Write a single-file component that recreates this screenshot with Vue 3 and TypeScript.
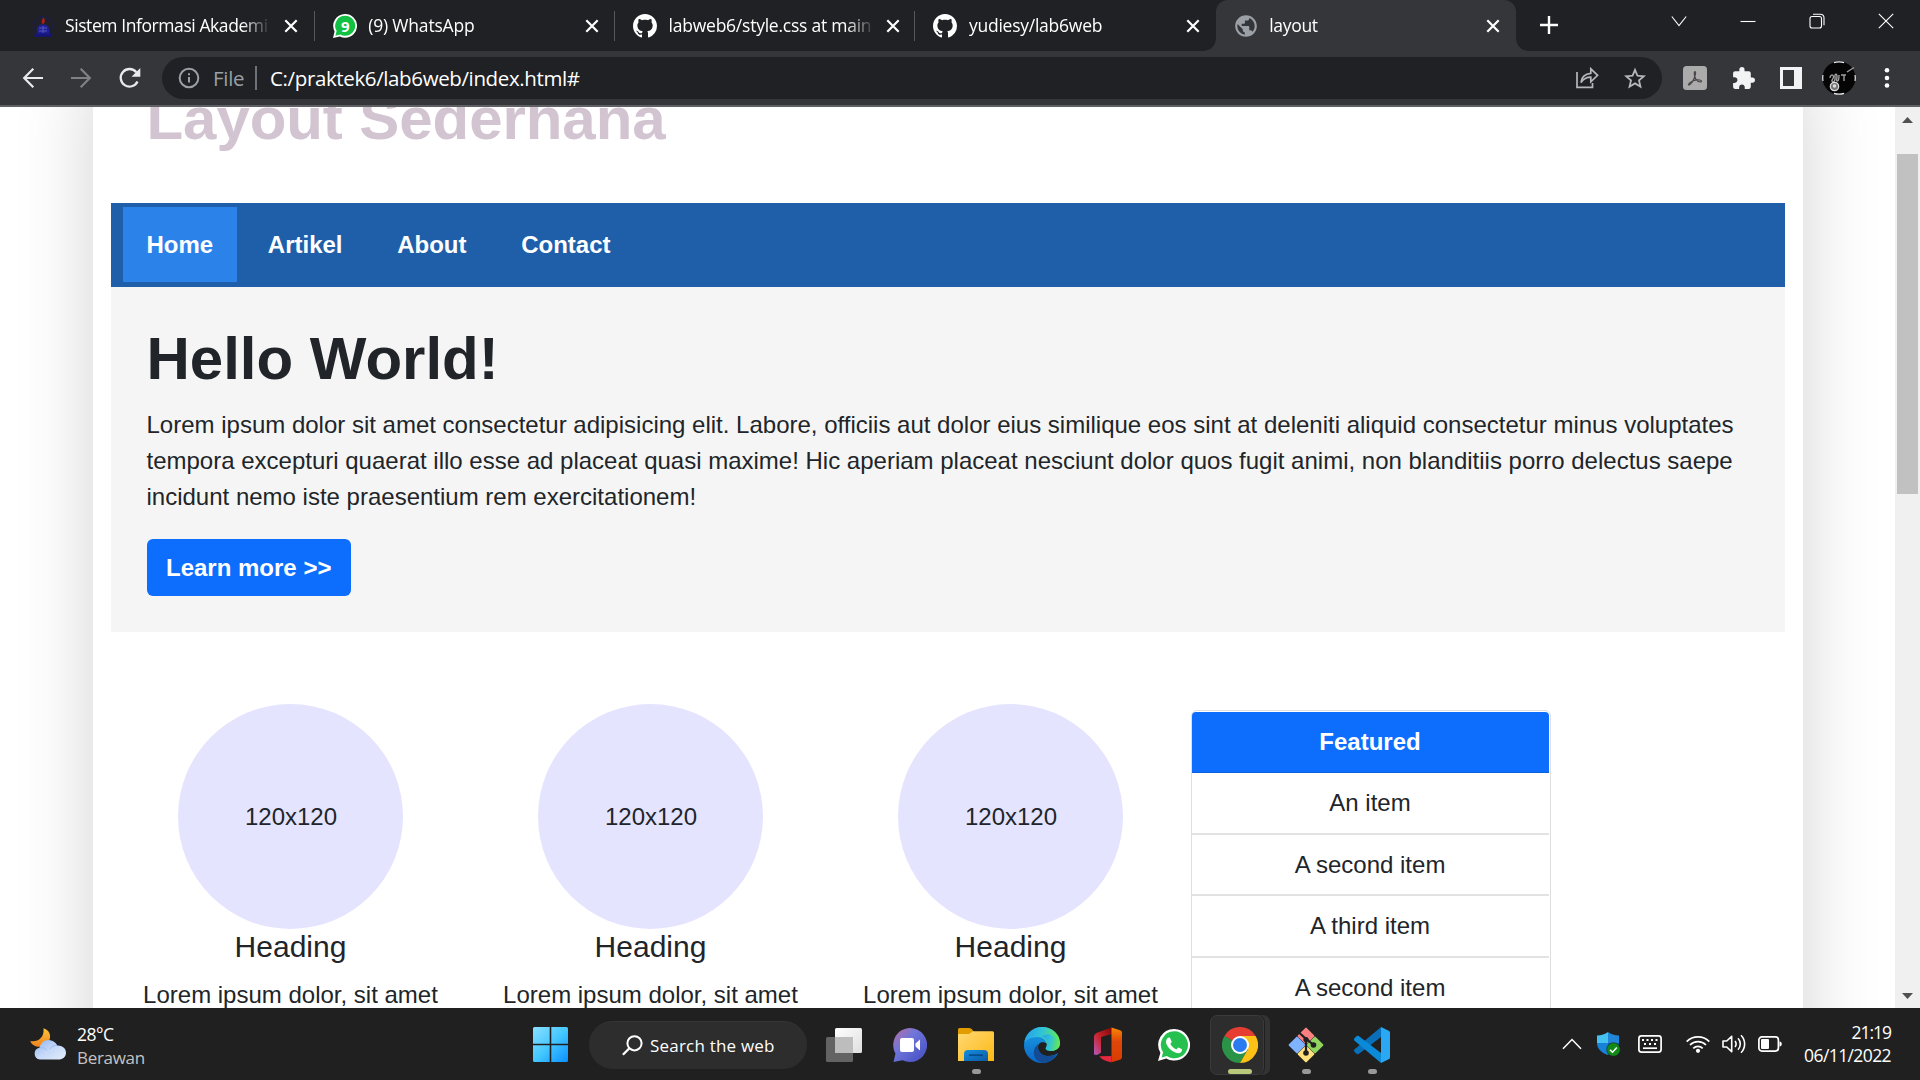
<script setup lang="ts">
interface Tab {
  title: string
  icon: 'campus' | 'whatsapp' | 'github' | 'globe'
  active?: boolean
  spacing: number
}

const tabs: Tab[] = [
  { title: 'Sistem Informasi Akademi', icon: 'campus', spacing: -0.42 },
  { title: '(9) WhatsApp', icon: 'whatsapp', spacing: -0.2 },
  { title: 'labweb6/style.css at main', icon: 'github', spacing: -0.24 },
  { title: 'yudiesy/lab6web', icon: 'github', spacing: -0.24 },
  { title: 'layout', icon: 'globe', active: true, spacing: -0.3 },
]

const menu = ['Home', 'Artikel', 'About', 'Contact']
const columns = [1, 2, 3]
const items = ['An item', 'A second item', 'A third item', 'A second item']
</script>

<template>
  <div class="screen">
    <div class="strip">
      <div v-for="(tab, i) in tabs" :key="i" class="tab" :class="{ active: tab.active }">
        <span class="favicon">
          <svg v-if="tab.icon === 'campus'" width="24" height="24" viewBox="0 0 24 24">
            <circle cx="12" cy="12" r="9.200" fill="none" stroke="#1b1b5c" stroke-width="1.300" stroke-dasharray="2 .8" />
            <path d="M6 14l3-3.500h6l3 3.500v6H6z" fill="#1f1f96" />
            <path d="M3.500 19.500h17v3.300h-17z" fill="#15157a" />
            <path d="M8 14h8M8 17h8M12 12v7" stroke="#5b5bc0" stroke-width=".9" />
            <path d="M12.500 3.500c2.500 3 1 6-.6 6.700-1.900-1-1.500-3.900.6-6.700z" fill="#b01c22" />
          </svg>
          <svg v-else-if="tab.icon === 'whatsapp'" width="24" height="24" viewBox="0 0 24 24">
            <path d="M12.200 0A11.800 11.800 0 0 1 12.200 23.700c-2 0-3.800-.4-5.300-1.200L0 24l1.600-6.600A11.800 11.800 0 0 1 12.200 0z" fill="#fff" />
            <path d="M12.200 1.800a10 10 0 1 1-4.900 18.700L2.400 21.700l1.200-4.700A10 10 0 0 1 12.200 1.800z" fill="#12c143" />
            <text x="12.300" y="17.600" text-anchor="middle" class="badge9">9</text>
          </svg>
          <svg v-else-if="tab.icon === 'github'" width="24" height="24" viewBox="0 0 16 16">
            <path fill="#fff" d="M8 0C3.580 0 0 3.580 0 8c0 3.540 2.290 6.530 5.470 7.590.4.070.55-.17.55-.38 0-.19-.01-.82-.01-1.490-2.010.37-2.530-.49-2.690-.94-.09-.23-.48-.94-.82-1.130-.28-.15-.68-.52-.01-.53.63-.01 1.080.58 1.230.82.72 1.210 1.870.87 2.330.66.070-.52.28-.87.51-1.070-1.780-.2-3.640-.89-3.640-3.950 0-.87.31-1.590.82-2.150-.08-.2-.36-1.020.08-2.120 0 0 .67-.21 2.200.82.64-.18 1.320-.27 2-.27s1.360.09 2 .27c1.530-1.040 2.200-.82 2.200-.82.44 1.100.16 1.920.08 2.120.51.56.82 1.270.82 2.150 0 3.070-1.870 3.750-3.650 3.950.29.25.54.73.54 1.480 0 1.070-.01 1.930-.01 2.200 0 .21.15.46.55.38A8.010 8.010 0 0 0 16 8c0-4.420-3.580-8-8-8z" />
          </svg>
          <svg v-else width="26" height="26" viewBox="0 0 24 24">
            <path fill="#9aa0a6" d="M12 2C6.480 2 2 6.480 2 12s4.480 10 10 10 10-4.480 10-10S17.520 2 12 2zm-1 17.930c-3.950-.49-7-3.850-7-7.930 0-.62.080-1.210.210-1.790L9 15v1c0 1.100.9 2 2 2v1.930zm6.900-2.540c-.26-.81-1-1.390-1.900-1.390h-1v-3c0-.55-.45-1-1-1H8v-2h2c.55 0 1-.45 1-1V7h2c1.100 0 2-.9 2-2v-.41c2.930 1.190 5 4.060 5 7.410 0 2.080-.8 3.970-2.100 5.390z" />
          </svg>
        </span>
        <span class="title" :style="{ letterSpacing: tab.spacing + 'px' }">{{ tab.title }}</span>
        <svg class="close" width="14" height="14" viewBox="0 0 14 14">
          <path d="M1.300 1.300l11.400 11.400M12.700 1.300L1.300 12.700" stroke="#fff" stroke-width="2.200" />
        </svg>
      </div>
      <svg class="plus" width="20" height="20" viewBox="0 0 20 20">
        <path d="M10 1v18M1 10h18" stroke="#fff" stroke-width="2.400" />
      </svg>
      <div class="controls">
        <span><svg width="16" height="12" viewBox="0 0 16 12"><path d="M.8 1.500L8 10.500l7.200-9" fill="none" stroke="#fff" stroke-width="1.100" /></svg></span>
        <span><svg width="16" height="12" viewBox="0 0 16 12"><path d="M.5 6.500h15" stroke="#fff" stroke-width="1.100" /></svg></span>
        <span><svg width="16" height="16" viewBox="0 0 16 16" fill="none" stroke="#fff" stroke-width="1.100"><rect x="1" y="3.500" width="11.500" height="11.500" rx="2" /><path d="M4 1.200h7.500a3.500 3.500 0 0 1 3.500 3.500v7.500" /></svg></span>
        <span><svg width="16" height="16" viewBox="0 0 16 16"><path d="M.8.800l14.400 14.400M15.200.8L.8 15.200" stroke="#fff" stroke-width="1.100" /></svg></span>
      </div>
    </div>

    <div class="toolbar">
      <span class="cell"><svg width="22" height="22" viewBox="0 0 22 22" fill="none" stroke="#e8eaed" stroke-width="2.200"><path d="M21 11H2.500M11.300 1.800L2.200 11l9.100 9.200" /></svg></span>
      <span class="cell"><svg width="22" height="22" viewBox="0 0 22 22" fill="none" stroke="#7f8185" stroke-width="2.200"><path d="M1 11h18.500M10.700 1.800l9.100 9.200-9.100 9.200" /></svg></span>
      <span class="cell reload">
        <svg width="22" height="22" viewBox="0 0 22 22"><path d="M18.500 14.500A8.800 8.800 0 1 1 17.300 5.200" fill="none" stroke="#e8eaed" stroke-width="2.300" /><path d="M21.300 1v8.800h-8.800z" fill="#e8eaed" /></svg>
      </span>
      <div class="omnibox">
        <svg class="info" width="22" height="22" viewBox="0 0 22 22"><circle cx="11" cy="11" r="9.300" fill="none" stroke="#9aa0a6" stroke-width="2" /><path d="M11 10v5.500M11 6.200v2.100" stroke="#9aa0a6" stroke-width="2" /></svg>
        <span class="scheme">File</span>
        <span class="divider"></span>
        <span class="url">C:/praktek6/lab6web/index.html#</span>
        <span class="cell share">
          <svg width="24" height="24" viewBox="0 0 24 24" fill="none" stroke="#b4b7bb" stroke-width="1.700"><path d="M2 6v15.300h15.500V17" /><path d="M6 16.500c.5-5.500 3.800-8.700 9.800-9.200V2.800l6.800 6.500-6.800 6.500v-4.600c-4.300 0-7.300 1.600-9.800 5.300z" /></svg>
        </span>
        <span class="cell">
          <svg width="24" height="24" viewBox="0 0 24 24"><path fill="#b4b7bb" d="M23 9.600l-7.900-.7L12 1.600 8.900 8.900 1 9.600l6 5.200-1.800 7.700L12 18.400l6.800 4.100-1.800-7.700zM12 16.300l-4.100 2.500 1.100-4.700-3.600-3.100 4.800-.4L12 6.200l1.900 4.400 4.700.4-3.600 3.100 1.100 4.700z" /></svg>
        </span>
      </div>
      <span class="cell">
        <svg width="24" height="24" viewBox="0 0 24 24"><rect width="24" height="24" rx="3.500" fill="#ababab" /><path d="M5.500 18.500c.5-2 6-5 11-4.500 2.500.4 2.500 2 .8 2-3.300-.2-6.300-3.800-6-9 .1-2 1.500-1.700 1.300.2-.5 4-3.300 9.800-5.600 11.300-1 .6-1.600.5-1.500 0z" fill="none" stroke="#484848" stroke-width="1.200" /></svg>
      </span>
      <span class="cell">
        <svg width="25" height="25" viewBox="0 0 24 24"><path fill="#f1f3f4" d="M20.500 11H19V7c0-1.100-.9-2-2-2h-4V3.500a2.500 2.500 0 0 0-5 0V5H4c-1.100 0-1.990.9-1.990 2v3.800H3.500c1.490 0 2.700 1.210 2.700 2.700s-1.210 2.700-2.700 2.700H2V20c0 1.100.9 2 2 2h3.800v-1.500c0-1.490 1.210-2.700 2.700-2.700s2.700 1.210 2.700 2.700V22H17c1.100 0 2-.9 2-2v-4h1.500a2.500 2.500 0 0 0 0-5z" /></svg>
      </span>
      <span class="cell">
        <svg width="22" height="22" viewBox="0 0 22 22"><path fill="#f1f3f4" fill-rule="evenodd" d="M0 0h22v22H0zM3 3v16h11V3z" /></svg>
      </span>
      <span class="cell">
        <svg width="34" height="34" viewBox="0 0 34 34">
          <circle cx="17" cy="17" r="16.500" fill="#050505" />
          <path d="M12 1.600a16.300 16.300 0 0 1 10 0M12 32.400a16.300 16.300 0 0 0 10 0M1 14a16.500 16.500 0 0 0 0 6M33 14a16.500 16.500 0 0 1 0 6" fill="none" stroke="#e8e8e8" stroke-width="1.200" />
          <path d="M8 17c0-3 3-4 3.500-1.500s-3 4-1 5 3-2 2.500-5 2-3 2 0-1 4.500.5 4.500 1.500-4 1.500-6M19 14h5M22 14v6M25 11l7-4.500" fill="none" stroke="#a0a0a0" stroke-width="1.400" />
          <circle cx="12.500" cy="25.500" r="4.200" fill="#777" stroke="#ddd" stroke-width="1.200" /><circle cx="12.500" cy="25" r="1.700" fill="#ddd" />
        </svg>
      </span>
      <span class="cell"><svg width="6" height="22" viewBox="0 0 6 22" fill="#fff"><circle cx="3" cy="3.300" r="2.300" /><circle cx="3" cy="11" r="2.300" /><circle cx="3" cy="18.500" r="2.300" /></svg></span>
    </div>

    <div class="viewport">
      <div class="page">
        <main class="container">
          <header><h1>Layout Sederhana</h1></header>
          <nav>
            <a v-for="(entry, i) in menu" :key="entry" :class="{ current: i === 0 }">{{ entry }}</a>
          </nav>
          <section class="hero">
            <h1>Hello World!</h1>
            <p>Lorem ipsum dolor sit amet consectetur adipisicing elit. Labore, officiis aut dolor eius similique eos sint at deleniti aliquid consectetur minus voluptates tempora excepturi quaerat illo esse ad placeat quasi maxime! Hic aperiam placeat nesciunt dolor quos fugit animi, non blanditiis porro delectus saepe incidunt nemo iste praesentium rem exercitationem!</p>
            <a class="btn">Learn more &gt;&gt;</a>
          </section>
          <section class="row">
            <div v-for="n in columns" :key="n" class="box">
              <div class="circle">120x120</div>
              <h3>Heading</h3>
              <p>Lorem ipsum dolor, sit amet</p>
            </div>
            <div class="card">
              <div class="card-header">Featured</div>
              <div v-for="(item, i) in items" :key="i" class="item">{{ item }}</div>
            </div>
          </section>
        </main>
      </div>
      <div class="scrollbar">
        <svg class="arrow" width="11" height="6" viewBox="0 0 11 6"><path d="M5.500 0L11 6H0z" fill="#505050" /></svg>
        <div class="thumb"></div>
        <svg class="arrow down" width="11" height="6" viewBox="0 0 11 6"><path d="M0 0h11L5.500 6z" fill="#505050" /></svg>
      </div>
    </div>

    <div class="taskbar">
      <div class="weather">
        <svg width="36" height="32" viewBox="0 0 36 32">
          <defs>
            <linearGradient id="moon" x1="0" y1="0" x2="0" y2="1"><stop offset="0" stop-color="#fbc43a" /><stop offset="1" stop-color="#f0821e" /></linearGradient>
            <linearGradient id="cloud" x1="0" y1="0" x2="1" y2="1"><stop offset="0" stop-color="#8db4ee" /><stop offset=".5" stop-color="#c5d8f8" /><stop offset="1" stop-color="#e3ecfb" /></linearGradient>
          </defs>
          <path d="M13.500.3c8 2.400 8.500 11.200 3 16-5.500 4.600-14.500 2.200-16.200-3.400 6 1.800 14.500-2.400 13.200-12.600z" fill="url(#moon)" />
          <path d="M10 31.500a5.900 5.900 0 0 1-.4-11.700c1-6.800 9.400-11 15.600-5 1.200 1 1.600 1.800 2 2.700 4.700-.3 8.800 2.600 8.800 7.200 0 4.200-3.300 6.800-7.500 6.800z" fill="url(#cloud)" />
          <path d="M9.600 19.800c4.500-.8 6.500 1 7 2.500M27.200 17.500c-3-.5-6 1-7.200 3.500" fill="none" stroke="#9dbcf0" stroke-width="1" />
        </svg>
        <div class="lines"><span class="temp">28°C</span><span class="desc">Berawan</span></div>
      </div>

      <div class="apps">
        <span class="app">
          <svg width="35" height="35" viewBox="0 0 35 35">
            <defs><linearGradient id="win" gradientUnits="userSpaceOnUse" x1="0" y1="0" x2="35" y2="35"><stop offset="0" stop-color="#8be0ff" /><stop offset=".5" stop-color="#45c8ff" /><stop offset="1" stop-color="#0a8fff" /></linearGradient></defs>
            <path d="M1.500 0H16.700v16.700H0V1.500A1.500 1.500 0 0 1 1.500 0zM18.300 0h15.200A1.500 1.500 0 0 1 35 1.500v15.200H18.300zM0 18.300h16.700V35H1.500A1.500 1.500 0 0 1 0 33.500zM18.300 18.300H35v15.200a1.500 1.500 0 0 1-1.500 1.500H18.300z" fill="url(#win)" />
          </svg>
        </span>
        <div class="search">
          <svg width="21" height="21" viewBox="0 0 21 21" fill="none" stroke="#fff" stroke-width="2"><circle cx="12.500" cy="8.300" r="7.100" /><path d="M7.400 13.300L.9 19.800" stroke-width="2.300" /></svg>
          <span>Search the web</span>
        </div>
        <span class="app">
          <svg width="36" height="34" viewBox="0 0 36 34">
            <defs><linearGradient id="tv" x1="0" y1="0" x2="1" y2="1"><stop offset="0" stop-color="#fff" /><stop offset="1" stop-color="#dedede" /></linearGradient></defs>
            <rect y="9" width="27" height="25" rx="1.500" fill="#636363" /><rect x="9" width="27" height="25" rx="1.500" fill="url(#tv)" /><path d="M9 9h18v16H10.500A1.500 1.500 0 0 1 9 23.500z" fill="#bdbdbd" />
          </svg>
        </span>
        <span class="app">
          <svg width="34" height="34" viewBox="0 0 34 34">
            <defs><linearGradient id="chat" x1="0" y1=".2" x2=".7" y2=".9"><stop offset="0" stop-color="#a86fae" /><stop offset=".4" stop-color="#7176d9" /><stop offset="1" stop-color="#5059c9" /></linearGradient></defs>
            <path d="M17 0a17 17 0 1 1-7.500 32.200L.5 34l2-8.500A17 17 0 0 1 17 0z" fill="url(#chat)" />
            <rect x="7" y="10" width="14" height="14" rx="2" fill="#fff" /><path d="M22.500 15.500l4.500-4v11l-4.500-4z" fill="#fff" />
          </svg>
        </span>
        <span class="app">
          <svg width="36" height="33" viewBox="0 0 36 33">
            <defs><linearGradient id="fold" x1="0" y1="0" x2="1" y2="1"><stop offset="0" stop-color="#ffd975" /><stop offset="1" stop-color="#fdb813" /></linearGradient><linearGradient id="fold2" x1="0" y1="0" x2="1" y2="1"><stop offset="0" stop-color="#1490df" /><stop offset="1" stop-color="#0c59a4" /></linearGradient></defs>
            <path d="M1.500 0H11c1.500 0 2.500.7 3.300 1.800L16 4v6H0V1.500A1.500 1.500 0 0 1 1.500 0z" fill="#e19d00" />
            <path d="M0 6h11l4-2.800h19.500A1.500 1.500 0 0 1 36 4.700V33H0z" fill="url(#fold)" />
            <path d="M6 33v-7a4 4 0 0 1 4-4h16a4 4 0 0 1 4 4v7z" fill="url(#fold2)" /><path d="M11 27.200h14" stroke="#064a8b" stroke-width="1.700" />
          </svg>
          <i class="mark"></i>
        </span>
        <span class="app">
          <svg width="36" height="36" viewBox="0 0 36 36">
            <defs>
              <linearGradient id="edge1" x1="0" y1=".3" x2="1" y2=".5"><stop offset="0" stop-color="#27a0e8" /><stop offset=".45" stop-color="#2fc3d8" /><stop offset="1" stop-color="#66eb4c" /></linearGradient>
              <linearGradient id="edge2" x1="0" y1="0" x2="0" y2="1"><stop offset="0" stop-color="#1ba0e6" /><stop offset="1" stop-color="#0a66c6" /></linearGradient>
            </defs>
            <circle cx="18" cy="18" r="18" fill="url(#edge2)" />
            <path d="M.3 16C1.500 7 9 0 18 0c10.500 0 18 7.500 18 15.700 0 5.500-4.500 8.500-9 8.300-4.500 0-6-1.800-5-3.400 2.300-4-1-10.600-8.500-10.600C7.500 10 1.500 12.800.3 16z" fill="url(#edge1)" />
            <path d="M36 16c0 5.200-4.500 8.200-9 8-4.500 0-6-1.800-5-3.400.8-1.500.9-2.800.4-4.300-4-2.300-8.400-.8-8.400 4.200 0 3.700 3.500 8.300 9.500 8.500 4 .1 7-1.300 9.500-2.500L36 26z" fill="#202020" />
            <path d="M14 17c-1.500 6 3 12 10 12 3.800 0 6.500-1 8.500-2-2.500 5-7.500 8.800-13.500 8.800C9 34.500 7 23 14 17z" fill="#134c94" />
            <path d="M24 7c6 2 12 5 12 9.500 0 4.700-4.500 7.500-9 7.500-4.500 0-6-1.800-5-3.400C25 16 22 11 18 9z" fill="url(#edge1)" />
          </svg>
        </span>
        <span class="app">
          <svg width="28" height="36" viewBox="0 0 28 36">
            <defs><linearGradient id="off1" x1="0" y1="1" x2="1" y2="0"><stop offset="0" stop-color="#b65abf" /><stop offset=".45" stop-color="#c9252c" /><stop offset="1" stop-color="#7d0606" /></linearGradient><linearGradient id="off2" x1="0" y1="0" x2="0" y2="1"><stop offset="0" stop-color="#f88a05" /><stop offset=".4" stop-color="#e0460a" /><stop offset="1" stop-color="#d83b01" /></linearGradient></defs>
            <path d="M17.500.5L3 5.800C1 6.600 0 8 0 10v17.500l3 .5 4-2.200V11.500c0-1.200.6-1.800 1.600-2L18 7z" fill="url(#off1)" />
            <path d="M17.500.5l8.500 2.800c1.300.5 2 1.400 2 2.800v24c0 1.200-.7 2.200-2 2.600l-8.500 2.600z" fill="url(#off2)" />
            <path d="M17.500 29l-12 .2c1.500 3.200 8 5.300 12 6.100z" fill="#e5283f" />
          </svg>
        </span>
        <span class="app">
          <svg width="32" height="32" viewBox="0 0 32 32">
            <path d="M16.200 0a15.800 15.800 0 1 1-8 29.400L0 32l2.400-8.300A15.800 15.800 0 0 1 16.200 0z" fill="#fff" />
            <path d="M16.200 2.300a13.500 13.500 0 1 1-7.400 24.600l-5.200 1.500 1.500-5.200A13.500 13.500 0 0 1 16.200 2.300z" fill="#26c04e" />
            <path d="M11 8.600c.6 0 1 .2 1.300.9l1.300 3c.2.600-.1 1-1.300 2.300 1.500 2.800 3.500 4.500 6.200 5.600.8-.9 1.400-2 1.900-1.900l3.300 1.600c.6.300.3 2-.4 2.800-1.500 1.500-3.500 1.700-6 .7-4-1.500-7.500-5-9.100-9-.7-2.200.5-5.900 2.800-6z" fill="#fff" />
          </svg>
        </span>
        <span class="app running">
          <span class="plate"></span>
          <svg width="36" height="36" viewBox="0 0 36 36">
            <path d="M18 18L2.400 9A18 18 0 0 1 33.600 9z" fill="#e63d32" />
            <path d="M18 18l7.800 4.500L18 36A18 18 0 0 1 2.400 9z" fill="#2b9348" />
            <path d="M18 9h15.600A18 18 0 0 1 18 36l7.800-13.500z" fill="#fcc117" />
            <circle cx="18" cy="18" r="9" fill="#fff" /><circle cx="18" cy="18" r="7" fill="#2a7bf0" />
          </svg>
          <i class="mark wide"></i>
        </span>
        <span class="app">
          <svg width="36" height="36" viewBox="0 0 36 36">
            <rect x="11.800" y="2.800" width="12.400" height="12.400" rx="1" fill="#f98080" transform="rotate(45 18 9)" />
            <rect x="2.800" y="11.800" width="12.400" height="12.400" rx="1" fill="#7fb2ff" transform="rotate(45 9 18)" />
            <rect x="20.800" y="11.800" width="12.400" height="12.400" rx="1" fill="#8fd560" transform="rotate(45 27 18)" />
            <rect x="11.800" y="20.800" width="12.400" height="12.400" rx="1" fill="#ffe07a" transform="rotate(45 18 27)" />
            <path d="M11.500 6L18 12v14M18 11.500l8 7" fill="none" stroke="#202020" stroke-width="2.200" /><circle cx="18" cy="12.500" r="2.600" fill="#202020" /><circle cx="18" cy="26" r="2.800" fill="#202020" /><circle cx="25.500" cy="18" r="2.800" fill="#202020" />
          </svg>
          <i class="mark"></i>
        </span>
        <span class="app">
          <svg width="36" height="36" viewBox="0 0 36 36">
            <path d="M27 0v10L5 26.700c-1 .7-2 .6-2.800-.1L.6 25c-.8-.8-.8-2 0-2.700z" fill="#0a6fb8" />
            <path d="M27 36V26L5 9.300c-1-.7-2-.6-2.800.1L.6 11c-.8.800-.8 2 0 2.700z" fill="#0b8ad8" />
            <path d="M27 0l7.700 3.700c.8.400 1.300 1.200 1.300 2v24.600c0 .8-.5 1.600-1.300 2L27 36z" fill="#2aa8f4" />
          </svg>
          <i class="mark"></i>
        </span>
      </div>

      <div class="tray">
        <svg class="t1" width="20" height="12" viewBox="0 0 20 12"><path d="M1 10.800L10 1.500l9 9.300" fill="none" stroke="#fff" stroke-width="1.500" /></svg>
        <svg class="t2" width="24" height="25" viewBox="0 0 24 25">
          <path d="M11 0c3 2.500 6.500 3.300 11 3.400v7.600H11z" fill="#2186d8" /><path d="M11 0C8 2.500 4.500 3.300 0 3.400v7.600h11z" fill="#45c1f2" /><path d="M0 11h11v12C5 21 0 17 0 11z" fill="#1683d8" /><path d="M11 11h11c0 6-5 10-11 12z" fill="#0b62b8" />
          <circle cx="16.500" cy="17.500" r="6.800" fill="#128a17" stroke="#1c1c1c" stroke-width=".6" /><path d="M13 17.700l2.500 2.500 4.300-4.600" fill="none" stroke="#fff" stroke-width="1.500" />
        </svg>
        <svg class="t3" width="24" height="18" viewBox="0 0 24 18" stroke="#fff" fill="none"><rect x=".9" y=".9" width="22.200" height="16.200" rx="2.500" stroke-width="1.700" /><path d="M4 5h2M8.500 5h2M13 5h2M17.500 5h2M6 9h2M11 9h2M16 9h2" stroke-width="2" /><path d="M5 13.200h14" stroke-width="1.700" /></svg>
        <svg class="t4" width="24" height="18" viewBox="0 0 24 18" stroke="#fff" fill="none" stroke-width="1.700"><path d="M.7 6.600a16 16 0 0 1 22.600 0M4 10a11.300 11.300 0 0 1 16 0M7.300 13.300a6.600 6.600 0 0 1 9.400 0" /><circle cx="12" cy="15.800" r="2.100" fill="#fff" stroke="none" /></svg>
        <svg class="t5" width="24" height="20" viewBox="0 0 24 20" stroke="#fff" fill="none" stroke-width="1.600"><path d="M1 7v6h3.700l5 4.700V2.300L4.700 7z" stroke-linejoin="round" /><path d="M13 7a5 5 0 0 1 0 6M16 4.200a8.500 8.500 0 0 1 0 11.600M19 1.200a12.500 12.500 0 0 1 0 17.600" /></svg>
        <svg class="t6" width="24" height="16" viewBox="0 0 24 16"><rect x=".9" y=".9" width="19.500" height="14.200" rx="3" fill="none" stroke="#fff" stroke-width="1.700" /><rect x="3" y="3" width="8" height="10" rx="1" fill="#fff" /><path d="M21.500 5.500c3 0 3 5 0 5z" fill="#fff" /></svg>
        <div class="clock"><span class="time">21:19</span><span class="date">06/11/2022</span></div>
      </div>
    </div>
  </div>
</template>

<style>
body {
  overflow: hidden;
  background: #fff;
}
</style>

<style scoped>
* {
  box-sizing: border-box;
}
svg {
  display: block;
  flex: none;
}
.screen {
  width: 1920px;
  height: 1080px;
  display: flex;
  flex-direction: column;
  overflow: hidden;
  font-family: "Open Sans", "Noto Sans", sans-serif;
}

/* tab strip */
.strip {
  height: 51px;
  flex: none;
  display: flex;
  background: #202124;
  padding-left: 14.500px;
}
.tab {
  width: 300.300px;
  flex: none;
  height: 51px;
  display: flex;
  align-items: center;
  padding-left: 17px;
  position: relative;
  border-right: 1.500px solid #4d4f53;
  border-image: linear-gradient(transparent 23%, #55575b 23%, #55575b 80%, transparent 80%) 1;
  border-width: 0 1.500px 0 0;
}
.tab:nth-child(4),
.tab.active {
  border: 0;
}
.tab.active {
  background: #35363a;
  border-radius: 12px 12px 0 0;
}
.tab.active::before,
.tab.active::after {
  content: "";
  position: absolute;
  bottom: 0;
  width: 12px;
  height: 12px;
}
.tab.active::before {
  left: -12px;
  background: radial-gradient(circle at 0 0, transparent 11.500px, #35363a 12px);
}
.tab.active::after {
  right: -12px;
  background: radial-gradient(circle at 100% 0, transparent 11.500px, #35363a 12px);
}
.favicon {
  width: 24px;
  height: 24px;
  margin-right: 11.500px;
  display: flex;
  align-items: center;
  justify-content: center;
}
.tab:first-child .favicon {
  width: 22px;
}
.tab:nth-child(n + 2) .favicon {
  margin-left: 1px;
}
.badge9 {
  font: bold 15px "Open Sans", sans-serif;
  fill: #fff;
}
.title {
  width: 206px;
  margin-top: -1px;
  white-space: nowrap;
  color: #fff;
  font-size: 17.500px;
  line-height: 24px;
  -webkit-mask-image: linear-gradient(90deg, #000 86%, transparent 100%);
  mask-image: linear-gradient(90deg, #000 86%, transparent 100%);
}
.close {
  position: relative;
  margin-left: 11px;
}
.tab:first-child .close {
  margin-left: 13px;
}
.plus {
  margin: 15px 0 0 23px;
}
.controls {
  margin-left: auto;
  height: 42px;
  display: flex;
}
.controls span {
  width: 69px;
  display: flex;
  align-items: center;
  justify-content: center;
}

/* toolbar */
.toolbar {
  height: 56px;
  flex: none;
  display: flex;
  align-items: center;
  padding: 0 9px;
  background: #35363a;
  border-bottom: 2px solid #5f6063;
}
.cell {
  width: 48px;
  flex: none;
  display: flex;
  align-items: center;
  justify-content: center;
}
.reload {
  padding-left: 1px;
}
.omnibox {
  flex: 1;
  height: 42px;
  margin: 0 9px;
  padding: 0 3px 0 16px;
  border-radius: 21px;
  background: #202124;
  display: flex;
  align-items: center;
  font-size: 20.500px;
  line-height: 28px;
}
.scheme {
  width: 41px;
  margin-left: 13px;
  color: #9aa0a6;
  letter-spacing: -.3px;
}
.divider {
  width: 2px;
  height: 24px;
  margin-left: 1px;
  background: #6f7276;
}
.url {
  margin-left: 13px;
  color: #fff;
  letter-spacing: -.37px;
}
.share {
  margin-left: auto;
}

/* page */
.viewport {
  flex: 1;
  min-height: 0;
  display: flex;
  overflow: hidden;
}
.page {
  width: 1895px;
  flex: none;
  overflow: hidden;
  background: #fff;
  font-family: "Liberation Sans", Arial, sans-serif;
  font-size: 24px;
  line-height: 36px;
  color: #212529;
}
.container {
  width: 1710px;
  height: 1600px;
  margin: -60px auto 0;
  padding: 0 18px;
  background: #fff;
  box-shadow: 0 24px 72px rgba(0, 0, 0, .175);
}
h1,
h3,
p {
  margin: 0;
}
h1 {
  font-size: 60px;
  line-height: 72px;
  font-weight: bold;
}
header {
  padding: 36px 36px 48px;
}
header h1 {
  color: #d2c5d1;
  letter-spacing: -.07px;
}
nav {
  height: 84px;
  background: #1f5faa;
  padding: 4px 12px;
  display: flex;
  gap: 6.670px;
}
nav a {
  padding: 0 24px;
  height: 75px;
  line-height: 75px;
  color: #fff;
  font-weight: bold;
}
nav .current {
  background: #2b83ea;
}
.hero {
  background: #f5f5f5;
  padding: 36px;
}
.hero h1 {
  margin-bottom: 12px;
}
.btn {
  display: block;
  width: max-content;
  margin-top: 24px;
  padding: 10.500px 19.500px;
  border-radius: 6px;
  background: #0d6efd;
  color: #fff;
  font-weight: bold;
}
.row {
  display: flex;
  align-items: flex-start;
  padding-top: 72px;
}
.box {
  width: 360px;
  text-align: center;
}
.circle {
  width: 225px;
  height: 225px;
  margin: 0 auto;
  padding-left: 1px;
  border-radius: 50%;
  line-height: 225px;
  background: #e5e4ff;
}
h3 {
  font-size: 30px;
  line-height: 36px;
  font-weight: normal;
  margin-bottom: 12px;
}
.card {
  width: 360px;
  margin-top: 6px;
  padding: 1px 1px 0 0;
  border: 1px solid #dfdfdf;
  border-radius: 6px;
  text-align: center;
}
.card-header {
  height: 61px;
  padding-top: 12px;
  background: #0d6efd;
  border-bottom: 1px solid #0b60dd;
  border-radius: 4px 4px 0 0;
  color: #fff;
  font-weight: bold;
}
.item {
  height: 61.500px;
  padding-top: 12px;
  border-bottom: 2px solid #e2e2e2;
}
.scrollbar {
  width: 25px;
  background: #f0f0f0;
  display: flex;
  flex-direction: column;
  align-items: center;
  padding: 10px 0 9px;
}
.thumb {
  width: 21px;
  height: 340px;
  margin-top: 31px;
  background: #c1c1c1;
}
.down {
  margin-top: auto;
}

/* taskbar */
.taskbar {
  height: 72px;
  flex: none;
  display: flex;
  background: #202020;
  color: #fff;
  font-size: 17px;
}
.weather {
  width: 517px;
  padding-left: 30px;
  display: flex;
}
.weather svg {
  margin: 20px 11px 0 0;
}
.lines {
  display: flex;
  flex-direction: column;
  padding-top: 14px;
}
.lines span {
  line-height: 24px;
}
.temp {
  font-size: 17.500px;
  letter-spacing: -.5px;
}
.desc {
  color: #c4c4c4;
  letter-spacing: -.3px;
}
.apps {
  display: flex;
}
.app {
  width: 66px;
  height: 72px;
  display: flex;
  align-items: center;
  justify-content: center;
  position: relative;
}
.app svg {
  position: relative;
  top: .5px;
}
.mark {
  position: absolute;
  bottom: 6px;
  left: 29px;
  width: 9px;
  height: 5px;
  border-radius: 3px;
  background: #989898;
}
.mark.wide {
  left: 21px;
  width: 24px;
  background: #b9c97b;
}
.plate {
  position: absolute;
  left: 3px;
  top: 7px;
  width: 54px;
  height: 60px;
  border: 1.500px solid #3a3a3a;
  border-radius: 7px;
  background: #2d2d2d;
  box-shadow: 1px 0 0 #202020, 6px 0 0 #333;
}
.search {
  width: 218px;
  height: 48px;
  margin: 13px 4px 0 6px;
  padding-left: 33px;
  border-radius: 24px;
  background: #2d2d2d;
  border-top: 1.500px solid #363636;
  display: flex;
  align-items: center;
  gap: 7px;
}
.search span {
  white-space: nowrap;
  letter-spacing: .2px;
}
.tray {
  margin-left: auto;
  padding-right: 29px;
  display: flex;
  align-items: center;
}
.t1 { margin-right: 15px; }
.t2 { margin-right: 17px; }
.t3 { margin-right: 24px; }
.t4 { margin-right: 12px; }
.t5 { margin-right: 12px; }
.clock {
  width: 109px;
  display: flex;
  flex-direction: column;
  align-items: flex-end;
  line-height: 23px;
}
.time {
  font-size: 17.500px;
  letter-spacing: -1px;
}
.date {
  font-size: 17.500px;
  letter-spacing: -.6px;
}
</style>
